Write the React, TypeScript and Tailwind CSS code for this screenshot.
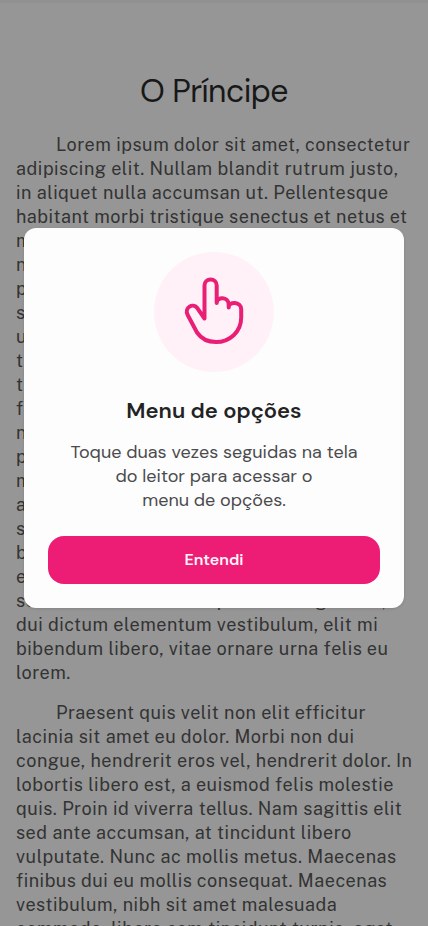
const firstParagraph = [
  "Lorem ipsum dolor sit amet, consectetur",
  "adipiscing elit. Nullam blandit rutrum justo,",
  "in aliquet nulla accumsan ut. Pellentesque",
  "habitant morbi tristique senectus et netus et",
  "malesuada fames ac turpis egestas. Duis",
  "nec lorem vitae massa dictum dapibus",
  "porta sit amet vel lacus. Etiam semper",
  "sapien et felis rhoncus, non gravida",
  "urna viverra. Integer at orci nec mi",
  "tincidunt laoreet. Quisque a nibh vitae",
  "tristique mattis commodo. Curabitur",
  "finibus diam eget luctus pulvinar.",
  "nunc at ligula non purus rhoncus",
  "pharetra. Vivamus in libero sed velit",
  "mollis tempor. Donec vitae lorem",
  "ac risus fermentum hendrerit. Morbi",
  "sodales neque at tellus convallis",
  "blandit. Sed ut eros nec nisl cursus",
  "euismod. Nulla vel ante id metus",
  "sed interdum urna nisi porta a congue elit,",
  "dui dictum elementum vestibulum, elit mi",
  "bibendum libero, vitae ornare urna felis eu",
  "lorem.",
];

const secondParagraph = [
  "Praesent quis velit non elit efficitur",
  "lacinia sit amet eu dolor. Morbi non dui",
  "congue, hendrerit eros vel, hendrerit dolor. In",
  "lobortis libero est, a euismod felis molestie",
  "quis. Proin id viverra tellus. Nam sagittis elit",
  "sed ante accumsan, at tincidunt libero",
  "vulputate. Nunc ac mollis metus. Maecenas",
  "finibus dui eu mollis consequat. Maecenas",
  "vestibulum, nibh sit amet malesuada",
  "commodo, libero sem tincidunt turpis, eget",
];

function Paragraph({ lines }: { lines: string[] }) {
  return (
    <p className="mb-4">
      {lines.map((line) => (
        <span key={line} className="block whitespace-nowrap first:pl-10">
          {line}
        </span>
      ))}
    </p>
  );
}

function TapIcon() {
  return (
    <svg
      viewBox="0 0 70 80"
      className="h-20 w-[70px]"
      fill="none"
      stroke="#e91f75"
      strokeWidth="4"
      strokeLinecap="round"
      strokeLinejoin="round"
    >
      <path d="M25.500 46.500V13.500a6 6 0 0 1 12.200 0V31c0-6.600 12-6.400 12 1.500V35.500c0-6.600 12.500-6 12.500 1.800V45.500C62.200 60 50.500 70 37 70 29 70 22.500 67 18 60.500L8.700 43C4.900 35.500 14 30.300 18.500 36.300L25.500 46.500" />
    </svg>
  );
}

export default function App() {
  return (
    <div className="relative h-[926px] w-full overflow-hidden border-t-[3px] border-[#919191] bg-[#969696]">
      <main className="px-4 pt-[66px]">
        <h1 className="mb-[19px] text-center font-['DM_Sans','Inter',sans-serif] text-[32px] leading-[45px] tracking-[-0.55px] text-[#181818]">
          O Príncipe
        </h1>
        <div className="font-['Public_Sans','Roboto',sans-serif] text-[18px] leading-6 tracking-[0.5px] text-[#333333]">
          <Paragraph lines={firstParagraph} />
          <Paragraph lines={secondParagraph} />
        </div>
      </main>

      <section
        role="dialog"
        className="absolute inset-x-6 top-[225px] flex h-[380px] flex-col items-center rounded-xl bg-[#fdfdfd] p-6 font-['DM_Sans','Inter',sans-serif] shadow-[0_1px_3px_rgba(0,0,0,0.12)]"
      >
        <div className="flex size-[120px] shrink-0 items-center justify-center rounded-full bg-[#fff1f7]">
          <TapIcon />
        </div>
        <h2 className="mt-6 text-[22px] font-semibold leading-[30px] text-[#232323]">
          Menu de opções
        </h2>
        <p className="mt-[14px] whitespace-nowrap text-center text-[18px] leading-6 text-[#4b4b4d]">
          Toque duas vezes seguidas na tela
          <br />
          do leitor para acessar o
          <br />
          menu de opções.
        </p>
        <button className="mt-auto h-12 w-full shrink-0 rounded-2xl bg-[#ed1c75] text-base font-semibold text-[#fff4f9]">
          Entendi
        </button>
      </section>
    </div>
  );
}
